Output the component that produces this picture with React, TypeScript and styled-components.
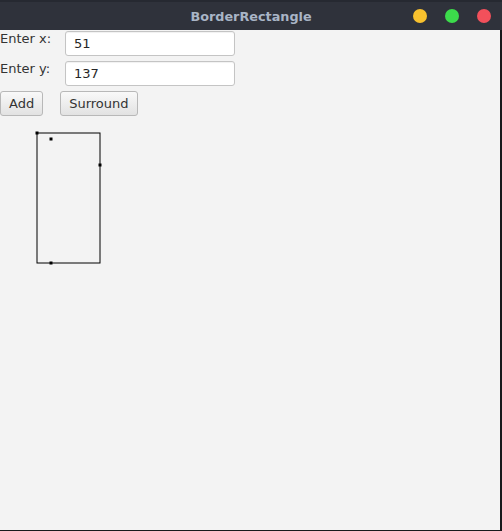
import React from "react";
import styled, { createGlobalStyle } from "styled-components";

const Global = createGlobalStyle`
  html, body { margin: 0; padding: 0; background: #1b1c20; }
  * { box-sizing: border-box; }
`;

const Frame = styled.div`
  width: 502px;
  height: 531px;
  background: #18191c;
  display: flex;
  flex-direction: column;
  overflow: hidden;
`;

const DesktopStrip = styled.div`
  height: 2px;
  background: #262931;
`;

const TitleBar = styled.div`
  height: 28px;
  background: #2f323b;
  position: relative;
  display: flex;
  align-items: center;
  justify-content: center;
`;

const Title = styled.div`
  font-family: "DejaVu Sans", sans-serif;
  font-weight: bold;
  font-size: 12.8px;
  color: #a9b5c6;
`;

const Controls = styled.div`
  position: absolute;
  right: 11px;
  top: 7px;
  display: flex;
  gap: 18px;
`;

const Dot = styled.span<{ $c: string }>`
  width: 14px;
  height: 14px;
  border-radius: 50%;
  background: ${(p) => p.$c};
`;

const Content = styled.div`
  width: 500px;
  height: 500px;
  background: #f3f3f3;
  display: flex;
  flex-direction: column;
  padding-top: 1px;
  font-family: "DejaVu Sans", sans-serif;
  font-size: 13px;
  color: #333;
`;

const Form = styled.div`
  display: flex;
  flex-direction: column;
  gap: 5px;
`;

const Row = styled.div`
  display: flex;
  align-items: flex-start;
`;

const Label = styled.div`
  width: 65px;
  line-height: 15px;
  color: #333;
`;

const Field = styled.div`
  width: 170px;
  height: 25px;
  background: #fff;
  border: 1px solid #c4c4c4;
  border-radius: 3px;
  box-shadow: inset 0 1px 1px rgba(0,0,0,0.06);
  padding: 0 8px;
  display: flex;
  align-items: center;
  color: #262626;
`;

const Buttons = styled.div`
  display: flex;
  gap: 17px;
`;

const Button = styled.div`
  height: 25px;
  padding: 0 8px;
  border: 1px solid #b8b8b8;
  border-radius: 3px;
  background: linear-gradient(#f9f9f9, #e2e2e2);
  display: flex;
  align-items: center;
  color: #333;
`;

const Canvas = styled.svg`
  display: block;
  flex: 1;
`;

const points = [
  [37, 133],
  [51, 139],
  [100, 165],
  [51, 263],
];

export default function App() {
  const oy = 116;
  return (
    <>
      <Global />
      <Frame>
        <DesktopStrip />
        <TitleBar>
          <Title>BorderRectangle</Title>
          <Controls>
            <Dot $c="#f8c12e" />
            <Dot $c="#3cdb4b" />
            <Dot $c="#f2505b" />
          </Controls>
        </TitleBar>
        <Content>
          <Form>
            <Row>
              <Label>Enter x:</Label>
              <Field>51</Field>
            </Row>
            <Row>
              <Label>Enter y:</Label>
              <Field>137</Field>
            </Row>
            <Buttons>
              <Button>Add</Button>
              <Button>Surround</Button>
            </Buttons>
          </Form>
          <Canvas width={500} height={414}>
            <rect
              x={37}
              y={133 - oy}
              width={63}
              height={130}
              fill="none"
              stroke="#000"
              strokeWidth={1}
            />
            {points.map(([x, y], i) => (
              <rect key={i} x={x - 1.5} y={y - oy - 1.5} width={3} height={3} fill="#000" />
            ))}
          </Canvas>
        </Content>
      </Frame>
    </>
  );
}
